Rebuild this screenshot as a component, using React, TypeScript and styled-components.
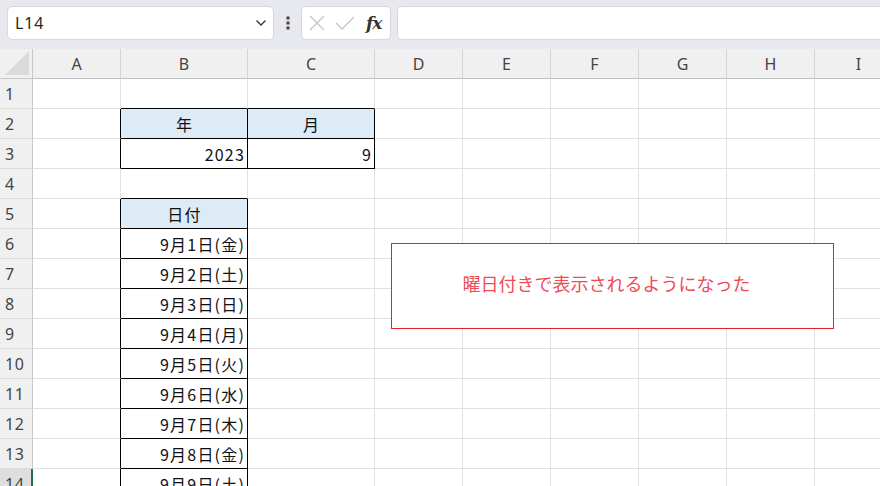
import React from "react";
import styled, { createGlobalStyle } from "styled-components";

const GlobalStyle = createGlobalStyle`
  html, body { margin: 0; padding: 0; background: #ffffff; overflow: hidden; }
  body { font-family: "Noto Sans CJK JP", "Noto Sans", sans-serif; }
`;

const COLS = ["A", "B", "C", "D", "E", "F", "G", "H", "I"];
const COL_W = [88, 127, 127, 88, 88, 88, 88, 88, 88];
const ROW_COUNT = 14;
const ROW_H = 30;
const HEAD_W = 33;

const Page = styled.div`
  width: 880px;
  height: 486px;
  overflow: hidden;
  display: flex;
  flex-direction: column;
`;

const Toolbar = styled.div`
  height: 49px;
  background: #e7e9ef;
  display: flex;
  align-items: flex-start;
  padding: 6px 0 0 7px;
  box-sizing: border-box;
  flex: none;
`;

const NameBox = styled.div`
  width: 267px;
  height: 34px;
  background: #fff;
  border: 1px solid #d6d8dd;
  border-radius: 5px;
  box-sizing: border-box;
  display: flex;
  align-items: center;
  justify-content: space-between;
  padding: 0 6px 0 7px;
  font-family: "Noto Sans", sans-serif;
  font-size: 16px;
  letter-spacing: 0.8px;
  color: #262626;
`;

const Dots = styled.div`
  width: 27px;
  height: 34px;
  display: flex;
  align-items: center;
  justify-content: center;
`;

const FxGroup = styled.div`
  width: 90px;
  height: 34px;
  background: #fff;
  border: 1px solid #d6d8dd;
  border-radius: 5px;
  box-sizing: border-box;
  display: flex;
  align-items: center;
  padding-left: 6px;
  gap: 8px;
`;

const Fx = styled.span`
  font-family: "DejaVu Serif", "Liberation Serif", serif;
  font-style: italic;
  font-weight: bold;
  font-size: 17px;
  color: #333;
  letter-spacing: -1px;
  margin-left: 2px;
`;

const FormulaInput = styled.div`
  flex: 1;
  height: 34px;
  margin-left: 6px;
  background: #fff;
  border: 1px solid #d6d8dd;
  border-right: none;
  border-radius: 5px 0 0 5px;
  box-sizing: border-box;
`;

const Sheet = styled.div`
  position: relative;
  display: grid;
  grid-template-columns: ${HEAD_W}px ${COL_W.map((w) => `${w}px`).join(" ")};
  grid-auto-rows: ${ROW_H}px;
  flex: none;
`;

const Corner = styled.div`
  background: #f0f0f0;
  border-right: 1px solid #c8c8c8;
  border-bottom: 1px solid #c8c8c8;
  display: flex;
  align-items: flex-end;
  justify-content: flex-end;
  padding: 0 3px 3px 0;
  box-sizing: border-box;
`;

const ColHead = styled.div`
  background: #f0f0f0;
  border-right: 1px solid #d4d4d4;
  border-bottom: 1px solid #c0c0c0;
  box-sizing: border-box;
  display: flex;
  align-items: center;
  justify-content: center;
  font-family: "Noto Sans", sans-serif;
  font-size: 16px;
  color: #444;
  padding-top: 1px;
`;

const RowHead = styled.div<{ $active?: boolean }>`
  background: ${(p) => (p.$active ? "#dedede" : "#f0f0f0")};
  border-right: ${(p) => (p.$active ? "2px solid #1e7145" : "1px solid #c8c8c8")};
  border-bottom: 1px solid #dadada;
  box-sizing: border-box;
  display: flex;
  align-items: center;
  padding-left: 5px;
  font-family: "Noto Sans", sans-serif;
  font-size: 16px;
  letter-spacing: 0.5px;
  color: #444;
`;

const Cell = styled.div<{ $rb?: boolean; $bb?: boolean; $fill?: boolean; $align?: string }>`
  background: ${(p) => (p.$fill ? "#ddebf7" : "#fff")};
  border-right: 1px solid ${(p) => (p.$rb ? "#000" : "#e1e1e1")};
  border-bottom: 1px solid ${(p) => (p.$bb ? "#000" : "#e1e1e1")};
  box-sizing: border-box;
  display: flex;
  align-items: center;
  justify-content: ${(p) => (p.$align === "center" ? "center" : "flex-end")};
  padding: 1px 2px 0 3px;
  font-family: "Noto Sans CJK JP", sans-serif;
  font-size: 16px;
  letter-spacing: 1.2px;
  color: #111;
  white-space: nowrap;
  overflow: hidden;
`;

const Callout = styled.div`
  position: absolute;
  left: 391px;
  top: 194px;
  width: 443px;
  height: 86px;
  box-sizing: border-box;
  background: #fff;
  border: 1px solid #e3242f;
  display: flex;
  align-items: center;
  justify-content: center;
  font-family: "Noto Sans CJK JP", sans-serif;
  font-size: 18px;
  color: #ef4a55;
  padding: 0 12px 7px 0;
`;

type CellData = { text: string; fill?: boolean; align?: "center" | "right" };

const weekdays = ["金", "土", "日", "月", "火", "水", "木", "金", "土"];

const data: Record<string, CellData> = {
  "2,1": { text: "年", fill: true, align: "center" },
  "2,2": { text: "月", fill: true, align: "center" },
  "3,1": { text: "2023" },
  "3,2": { text: "9" },
  "5,1": { text: "日付", fill: true, align: "center" },
};
weekdays.forEach((w, i) => {
  data[`${6 + i},1`] = { text: `9月${i + 1}日(${w})` };
});

const inTable = (r: number, c: number) =>
  ((r === 2 || r === 3) && (c === 1 || c === 2)) || (r >= 5 && r <= 14 && c === 1);

function Chevron() {
  return (
    <svg width="12" height="8" viewBox="0 0 12 8">
      <path d="M1.5 1.5 L6 6 L10.5 1.5" fill="none" stroke="#333" strokeWidth="1.3" />
    </svg>
  );
}

function VDots() {
  return (
    <svg width="4" height="14" viewBox="0 0 4 14">
      <rect x="0.5" y="0.5" width="3" height="3" fill="#444" />
      <rect x="0.5" y="5.5" width="3" height="3" fill="#444" />
      <rect x="0.5" y="10.5" width="3" height="3" fill="#444" />
    </svg>
  );
}

function Cross() {
  return (
    <svg width="18" height="18" viewBox="0 0 18 18">
      <path d="M2 2 L16 16 M16 2 L2 16" stroke="#c4c4c4" strokeWidth="1.3" fill="none" />
    </svg>
  );
}

function Check() {
  return (
    <svg width="22" height="18" viewBox="0 0 22 18">
      <path d="M2 9 L8 15 L20 3" stroke="#c4c4c4" strokeWidth="1.3" fill="none" />
    </svg>
  );
}

function CornerTriangle() {
  return (
    <svg width="24" height="24" viewBox="0 0 24 24">
      <path d="M24 0 L24 24 L0 24 Z" fill="#dadada" />
    </svg>
  );
}

export default function App() {
  const rows = Array.from({ length: ROW_COUNT }, (_, i) => i + 1);
  return (
    <Page>
      <GlobalStyle />
      <Toolbar>
        <NameBox>
          <span>L14</span>
          <Chevron />
        </NameBox>
        <Dots>
          <VDots />
        </Dots>
        <FxGroup>
          <Cross />
          <Check />
          <Fx>fx</Fx>
        </FxGroup>
        <FormulaInput />
      </Toolbar>
      <Sheet>
        <Corner>
          <CornerTriangle />
        </Corner>
        {COLS.map((c) => (
          <ColHead key={c}>{c}</ColHead>
        ))}
        {rows.map((r) => (
          <React.Fragment key={r}>
            <RowHead $active={r === 14}>{r}</RowHead>
            {COLS.map((_, ci) => {
              const d = data[`${r},${ci}`];
              return (
                <Cell
                  key={ci}
                  $rb={inTable(r, ci) || inTable(r, ci + 1)}
                  $bb={inTable(r, ci) || inTable(r + 1, ci)}
                  $fill={d?.fill}
                  $align={d?.align}
                >
                  {d?.text}
                </Cell>
              );
            })}
          </React.Fragment>
        ))}
        <Callout>曜日付きで表示されるようになった</Callout>
      </Sheet>
    </Page>
  );
}
